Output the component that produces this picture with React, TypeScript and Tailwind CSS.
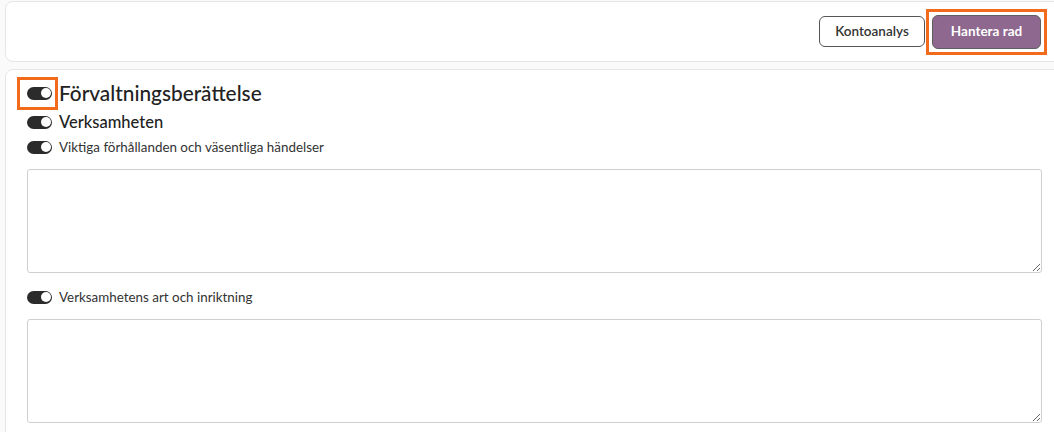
import React, { useState } from 'react';

const font = { fontFamily: 'Lato, "Noto Sans", sans-serif' };

type ToggleProps = {
  on: boolean;
  onChange: () => void;
};

const Toggle: React.FC<ToggleProps> = ({ on, onChange }) => (
  <button
    onClick={onChange}
    className={`relative h-[13px] w-[25px] flex-shrink-0 rounded-full ${on ? 'bg-[#2b2b2b]' : 'bg-[#bdbdbd]'}`}
  >
    <span
      className={`absolute top-[1.5px] h-[10px] w-[10px] rounded-full bg-white ${on ? 'right-[1.5px]' : 'left-[1.5px]'}`}
    />
  </button>
);

const Highlight: React.FC<{ className: string }> = ({ className }) => (
  <span className={`pointer-events-none absolute border-[3px] border-[#f26b1d] ${className}`} />
);

type Section = {
  label: string;
};

const sections: Section[] = [
  { label: 'Viktiga förhållanden och väsentliga händelser' },
  { label: 'Verksamhetens art och inriktning' },
];

const App: React.FC = () => {
  const [main, setMain] = useState(true);
  const [sub, setSub] = useState(true);
  const [rows, setRows] = useState([true, true]);

  return (
    <div className="h-[432px] overflow-hidden bg-[#fafafa] pl-[5px] pt-[1px] text-[#222]" style={font}>
      {/* top bar */}
      <div className="mr-[-10px] flex h-[61px] items-center justify-end gap-[7px] rounded-lg border border-[#e6e6e6] bg-white pr-[22px]">
        <button className="h-[31px] w-[106px] rounded-md border border-[#555] bg-white text-[13.5px] font-semibold text-[#333]">
          Kontoanalys
        </button>
        <div className="relative">
          <button className="h-[34px] w-[109px] rounded-md border border-[#5e5e5e] bg-[#8e688e] text-[13.5px] font-bold text-white">
            Hantera rad
          </button>
          <Highlight className="-inset-[6px]" />
        </div>
      </div>

      {/* content card */}
      <div className="mr-[-10px] mt-[7px] rounded-lg border border-[#e6e6e6] bg-white pb-6 pl-[21px] pr-[21px] pt-[16px]">
        <div className="flex items-center gap-[7px]">
          <div className="relative flex">
            <Toggle on={main} onChange={() => setMain(!main)} />
            <Highlight className="-bottom-[10px] -left-[10px] -right-[6px] -top-[10px]" />
          </div>
          <h2 className="text-[20.8px] font-medium leading-[14px] text-[#222]">Förvaltningsberättelse</h2>
        </div>

        <div className="mt-[13px] flex items-center gap-[7px]">
          <Toggle on={sub} onChange={() => setSub(!sub)} />
          <h3 className="text-[16.5px] font-medium leading-[18px] text-[#222]">Verksamheten</h3>
        </div>

        {sections.map((s, i) => (
          <div key={s.label}>
            <div className={`flex items-center gap-[7px] ${i === 0 ? 'mt-[7px]' : 'mt-[15px]'}`}>
              <Toggle
                on={rows[i]}
                onChange={() => setRows(rows.map((r, j) => (j === i ? !r : r)))}
              />
              <span className="text-[13.4px] leading-[18px] text-[#333]">{s.label}</span>
            </div>
            <textarea className="mt-[13px] block h-[104px] w-full rounded-[3px] border border-[#cfcfcf] bg-white outline-none" />
          </div>
        ))}
      </div>
    </div>
  );
};

export default App;
